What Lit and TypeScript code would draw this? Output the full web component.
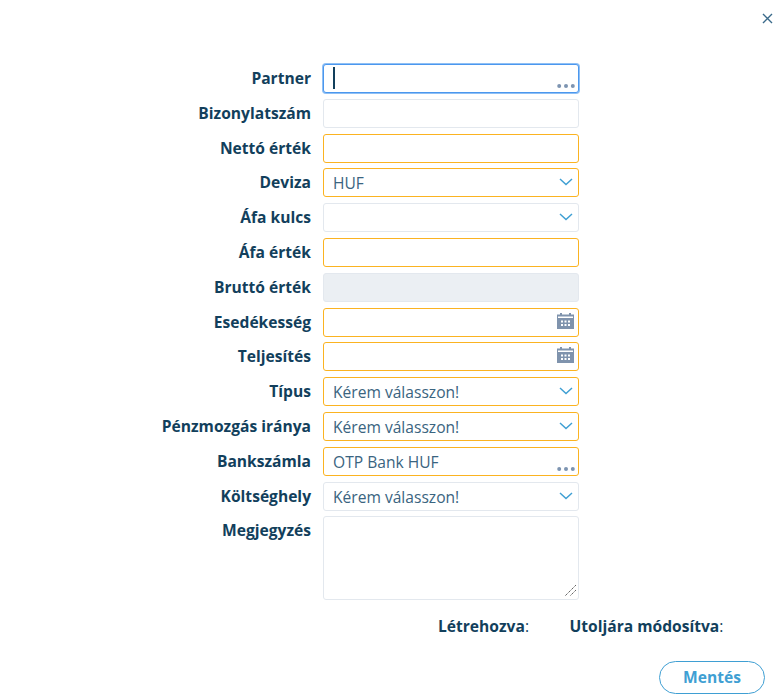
import { LitElement, html, css, svg } from "lit";
import { customElement } from "lit/decorators.js";

type Row = { label: string; kind?: string; tone?: string; value?: string; focus?: boolean };

const rows: Row[] = [
  { label: "Partner", kind: "dots", focus: true },
  { label: "Bizonylatszám" },
  { label: "Nettó érték", tone: "req" },
  { label: "Deviza", kind: "select", tone: "req", value: "HUF" },
  { label: "Áfa kulcs", kind: "select" },
  { label: "Áfa érték", tone: "req" },
  { label: "Bruttó érték", tone: "dis" },
  { label: "Esedékesség", kind: "date", tone: "req" },
  { label: "Teljesítés", kind: "date", tone: "req" },
  { label: "Típus", kind: "select", tone: "req", value: "Kérem válasszon!" },
  { label: "Pénzmozgás iránya", kind: "select", tone: "req", value: "Kérem válasszon!" },
  { label: "Bankszámla", kind: "dots", tone: "req", value: "OTP Bank HUF" },
  { label: "Költséghely", kind: "select", value: "Kérem válasszon!" },
];

const chevron = svg`<svg class="chev" width="14" height="8" viewBox="0 0 14 8"><path d="M1 1l6 5.500L13 1" fill="none" stroke="#3f9fd3" stroke-width="1.500"/></svg>`;
const dots = svg`<svg class="dots" width="20" height="4" viewBox="0 0 20 4"><g fill="#7d94b1"><circle cx="2.200" cy="2" r="2"/><circle cx="9" cy="2" r="2"/><circle cx="15.800" cy="2" r="2"/></g></svg>`;
const cal = svg`<svg class="cal" width="17" height="16" viewBox="0 0 17 16"><path fill="#7f93ad" fill-rule="evenodd" d="M3 0h2v1.500h7V0h2v1.500h3V16H0V1.500h3zM1 3.500v1.500h15V3.500zM4 7.500v2h2v-2zm3.500 0v2h2v-2zm3.500 0v2h2v-2zM4 11v2h2v-2zm3.500 0v2h2v-2zm3.500 0v2h2v-2z"/></svg>`;

@customElement("app-root")
export class AppRoot extends LitElement {
  static styles = css`
    :host { display: block; width: 784px; height: 699px; box-sizing: border-box; padding-top: 64px;
      font-family: "Open Sans", sans-serif; color: #123f5c; background: #fff; position: relative; overflow: hidden; }
    .close { position: absolute; top: 13px; right: 11px; width: 11px; height: 11px; }
    .form { display: grid; grid-template-columns: 311px 256px; grid-template-rows: repeat(13, 29px) 84px; column-gap: 12px; row-gap: 5.8px; }
    label { font-weight: 700; font-size: 15.6px; line-height: 29px; text-align: right; white-space: nowrap; }
    .field { position: relative; box-sizing: border-box; border: 1px solid #e3e8ee; border-radius: 3px; background: #fff;
      font-size: 15.6px; line-height: 29px; padding-left: 9px; color: #3a6480; }
    .req { border-color: #fbb321; }
    .dis { background: #ebeff3; border-color: #e3e8ee; }
    .focus { border: 1px solid #4b97ee; box-shadow: 0 0 0 1px #8fc0f5; }
    .caret { position: absolute; left: 9px; top: 2px; width: 2px; height: 22px; background: #123f5c; }
    .chev, .dots, .cal { position: absolute; }
    .chev { right: 5px; top: 9px; }
    .dots { right: 1px; top: 19px; }
    .cal { right: 4px; top: 4px; }
    .grip { position: absolute; right: 1px; bottom: 2px; }
    .meta { display: flex; font-size: 15.6px; line-height: 20px; margin: 15.6px 0 0 438px; }
    .meta b { font-weight: 700; }
    .meta span + span { margin-left: 40.5px; }
    .actions { display: flex; justify-content: flex-end; padding: 25px 19px 0 0; }
    button { box-sizing: border-box; width: 106px; height: 33px; border: 1px solid #3f9fd3; border-radius: 17px; background: #fff;
      color: #3f9fd3; font: 700 15.6px "Open Sans", sans-serif; padding: 0; }
  `;

  field(r: Row) {
    const cls = ["field", r.tone ?? "", r.focus ? "focus" : ""].join(" ");
    return html`<div class=${cls}>
      ${r.value ?? ""}${r.focus ? html`<span class="caret"></span>` : ""}
      ${r.kind === "select" ? chevron : r.kind === "dots" ? dots : r.kind === "date" ? cal : ""}
    </div>`;
  }

  render() {
    return html`
      <svg class="close" viewBox="0 0 11 11"><path d="M1 1l9 9M10 1l-9 9" stroke="#3a6a8a" stroke-width="1.400" fill="none"/></svg>
      <div class="form">
        ${rows.map((r) => html`<label>${r.label}</label>${this.field(r)}`)}
        <label>Megjegyzés</label>
        <div class="field">
          <svg class="grip" width="13" height="13" viewBox="0 0 13 13"><path d="M12 1L1 12M12 6l-6 6" stroke="#666" stroke-width="1" stroke-dasharray="1.500 .6" fill="none"/></svg>
        </div>
      </div>
      <div class="meta"><span><b>Létrehozva</b>:</span><span><b>Utoljára módosítva</b>:</span></div>
      <div class="actions"><button>Mentés</button></div>
    `;
  }
}
